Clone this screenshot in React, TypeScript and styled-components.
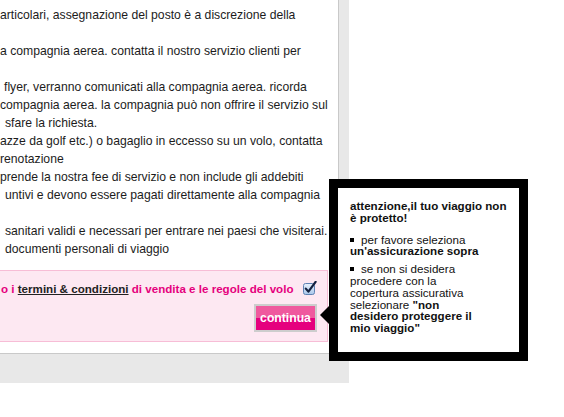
import React from "react";
import styled, { createGlobalStyle } from "styled-components";

const GlobalStyle = createGlobalStyle`
  html, body {
    margin: 0;
    padding: 0;
    background: #ffffff;
  }
  body {
    font-family: "Liberation Sans", Arial, Helvetica, sans-serif;
    color: #1a1a1a;
  }
`;

const Page = styled.div`
  position: relative;
  width: 564px;
  height: 417px;
  overflow: hidden;
`;

const Frame = styled.div`
  width: 339px;
  padding: 0 10px 29px 0;
  background: #e8e8e8;
`;

const Panel = styled.div`
  height: 347px;
  padding-top: 6px;
  background: #ffffff;
  border-right: 1px solid #c9c9c9;
  border-bottom: 1px solid #c9c9c9;
  overflow: hidden;
  display: flex;
  flex-direction: column;
`;

const Notes = styled.div`
  display: flex;
  flex-direction: column;
`;

const NoteLine = styled.div<{ $indent: number }>`
  height: 18px;
  line-height: 18px;
  font-size: 12.2px;
  white-space: nowrap;
  padding-left: ${(p) => p.$indent}px;
  color: #1c1c1c;
`;

const TermsBox = styled.div`
  margin: 12px 10px 0 -10px;
  padding: 9px 10px 9px 10px;
  background: #fde8f2;
  border: 1px solid #f7bdd6;
  display: flex;
  flex-direction: column;
  gap: 8px;
`;

const TermsRow = styled.div`
  display: flex;
  align-items: center;
  justify-content: space-between;
  height: 16px;
`;

const TermsText = styled.span`
  font-size: 11.6px;
  font-weight: bold;
  color: #e5007d;
  white-space: nowrap;
`;

const TermsLink = styled.span`
  color: #222222;
  text-decoration: underline;
`;

const Check = styled.svg`
  display: block;
  flex: none;
  margin-top: -1px;
`;

const ButtonRow = styled.div`
  display: flex;
  justify-content: flex-end;
`;

const ContinueButton = styled.button`
  width: 63px;
  height: 28px;
  padding: 0;
  border: 2px solid #cdcdcd;
  background: linear-gradient(#ef599e 0, #ef599e 50%, #e5007e 50%, #e5007e 100%);
  color: #ffffff;
  font-family: "Liberation Sans", Arial, sans-serif;
  font-weight: bold;
  font-size: 12.2px;
  cursor: pointer;
`;

const Callout = styled.div`
  position: absolute;
  left: 329px;
  top: 179px;
  width: 199px;
  height: 182px;
  box-sizing: border-box;
  border: 9px solid #000000;
  background: #ffffff;
  padding: 12px 6px 0 12px;
  font-size: 11.6px;
  line-height: 11.8px;
  color: #111111;

  &::before {
    content: "";
    position: absolute;
    left: -18px;
    top: 118px;
    width: 0;
    height: 0;
    border-top: 9px solid transparent;
    border-bottom: 9px solid transparent;
    border-right: 9px solid #000000;
  }
`;

const CalloutTitle = styled.div`
  font-weight: bold;
  margin-bottom: 10px;
`;

const CalloutItem = styled.div`
  margin-bottom: 6px;
`;

const Bullet = styled.span`
  display: inline-block;
  width: 4px;
  height: 4px;
  background: #000000;
  margin-right: 7px;
  vertical-align: 2px;
`;

const Strong = styled.b`
  font-weight: bold;
`;

const lines: { text: string; indent: number }[] = [
  { text: "articolari, assegnazione del posto è a discrezione della", indent: 0 },
  { text: "", indent: 0 },
  { text: "a compagnia aerea. contatta il nostro servizio clienti per", indent: 0 },
  { text: "", indent: 0 },
  { text: "flyer, verranno comunicati alla compagnia aerea. ricorda", indent: 4 },
  { text: "compagnia aerea. la compagnia può non offrire il servizio sul", indent: 0 },
  { text: "sfare la richiesta.", indent: 5 },
  { text: "azze da golf etc.) o bagaglio in eccesso su un volo, contatta", indent: 0 },
  { text: "renotazione", indent: 0 },
  { text: "prende la nostra fee di servizio e non include gli addebiti", indent: 0 },
  { text: "untivi e devono essere pagati direttamente alla compagnia", indent: 5 },
  { text: "", indent: 0 },
  { text: "sanitari validi e necessari per entrare nei paesi che visiterai.", indent: 5 },
  { text: "documenti personali di viaggio", indent: 5 },
];

const CheckedBox = () => (
  <Check width="14" height="14" viewBox="0 0 14 14">
    <defs>
      <linearGradient id="cbg" x1="0" y1="0" x2="0" y2="1">
        <stop offset="0" stopColor="#e9f2fc" />
        <stop offset="1" stopColor="#a8c6ea" />
      </linearGradient>
    </defs>
    <rect x="0.5" y="2.5" width="11" height="11" rx="2" fill="url(#cbg)" stroke="#5f82b3" />
    <path d="M2.8 7.6 L5.4 10.6 L12.6 0.8" fill="none" stroke="#14213f" strokeWidth="2.2" strokeLinecap="round" strokeLinejoin="round" />
  </Check>
);

export default function App() {
  return (
    <>
      <GlobalStyle />
      <Page>
        <Frame>
          <Panel>
            <Notes>
              {lines.map((l, i) => (
                <NoteLine key={i} $indent={l.indent}>
                  {l.text}
                </NoteLine>
              ))}
            </Notes>
            <TermsBox>
              <TermsRow>
                <TermsText>
                  o i <TermsLink>termini &amp; condizioni</TermsLink> di vendita e le regole del volo
                </TermsText>
                <CheckedBox />
              </TermsRow>
              <ButtonRow>
                <ContinueButton type="button">continua</ContinueButton>
              </ButtonRow>
            </TermsBox>
          </Panel>
        </Frame>
        <Callout>
          <CalloutTitle>
            attenzione,il tuo viaggio non
            <br />è protetto!
          </CalloutTitle>
          <CalloutItem>
            <Bullet />
            per favore seleziona
            <br />
            <Strong>un'assicurazione sopra</Strong>
          </CalloutItem>
          <CalloutItem>
            <Bullet />
            se non si desidera
            <br />
            procedere con la
            <br />
            copertura assicurativa
            <br />
            selezionare <Strong>"non</Strong>
            <br />
            <Strong>desidero proteggere il</Strong>
            <br />
            <Strong>mio viaggio"</Strong>
          </CalloutItem>
        </Callout>
      </Page>
    </>
  );
}
